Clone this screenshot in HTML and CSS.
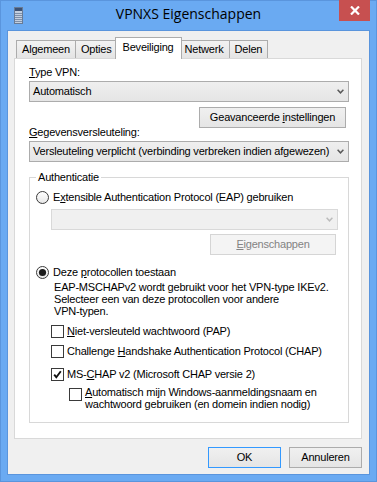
FILE: index.html
```html
<!DOCTYPE html>
<html lang="nl">
<head>
<meta charset="utf-8">
<title>VPNXS Eigenschappen</title>
<link rel="stylesheet" href="styles.css">
</head>
<body>
<div class="window">
  <div class="titlebar">
    <div class="tb-left">
      <svg class="app-icon" width="9" height="17" viewBox="0 0 9 17">
        <rect x="0.5" y="0.5" width="8" height="16" fill="#c3cfdf" stroke="#687b96"/>
        <rect x="1" y="1" width="7" height="3" fill="#3d5274"/>
        <rect x="1" y="6" width="7" height="1" fill="#7d8fa9"/>
        <rect x="1" y="8" width="7" height="1" fill="#7d8fa9"/>
        <rect x="1" y="10" width="7" height="1" fill="#7d8fa9"/>
        <rect x="1" y="12" width="7" height="1" fill="#7d8fa9"/>
        <rect x="1" y="14" width="7" height="1" fill="#7d8fa9"/>
      </svg>
    </div>
    <div class="title">VPNXS Eigenschappen</div>
    <div class="tb-right">
      <div class="close">
        <svg width="10" height="9" viewBox="0 0 10 9"><path d="M1 0.5 L9 8.5 M9 0.5 L1 8.5" stroke="#fff" stroke-width="2.2" fill="none"/></svg>
      </div>
    </div>
  </div>
  <div class="client">
    <div class="tabs">
      <div class="tab">Algemeen</div>
      <div class="tab">Opties</div>
      <div class="tab active">Beveiliging</div>
      <div class="tab">Netwerk</div>
      <div class="tab">Delen</div>
    </div>
    <div class="panel">
      <div class="label"><u>T</u>ype VPN:</div>
      <div class="combo">
        <span class="combo-text">Automatisch</span>
        <span class="combo-arrow"><svg width="7" height="5" viewBox="0 0 7 5"><polyline points="0.6,0.8 3.5,3.8 6.4,0.8" fill="none" stroke="#5a5a5a" stroke-width="1.5"/></svg></span>
      </div>
      <div class="btn btn-adv">Geavanceerde <u>i</u>nstellingen</div>
      <div class="label label-enc"><u>G</u>egevensversleuteling:</div>
      <div class="combo">
        <span class="combo-text">Versleuteling verplicht (verbinding verbreken indien afgewezen)</span>
        <span class="combo-arrow"><svg width="7" height="5" viewBox="0 0 7 5"><polyline points="0.6,0.8 3.5,3.8 6.4,0.8" fill="none" stroke="#5a5a5a" stroke-width="1.5"/></svg></span>
      </div>
      <fieldset class="group">
        <legend>Authenticatie</legend>
        <div class="opt opt-eap">
          <svg class="radio" width="13" height="13" viewBox="0 0 13 13"><defs><linearGradient id="rg1" x1="0" y1="0" x2="0" y2="1"><stop offset="0" stop-color="#fff"/><stop offset="1" stop-color="#e6e6e6"/></linearGradient></defs><circle cx="6.5" cy="6.5" r="6" fill="url(#rg1)" stroke="#3a3a3a"/></svg>
          <span>E<u>x</u>tensible Authentication Protocol (EAP) gebruiken</span>
        </div>
        <div class="combo combo-disabled eap-combo">
          <span class="combo-text"></span>
          <span class="combo-arrow"><svg width="7" height="5" viewBox="0 0 7 5"><polyline points="0.6,0.8 3.5,3.8 6.4,0.8" fill="none" stroke="#bcbcbc" stroke-width="1.5"/></svg></span>
        </div>
        <div class="btn btn-disabled eap-btn"><u>E</u>igenschappen</div>
        <div class="opt opt-allow">
          <svg class="radio" width="13" height="13" viewBox="0 0 13 13"><defs><linearGradient id="rg2" x1="0" y1="0" x2="0" y2="1"><stop offset="0" stop-color="#fff"/><stop offset="1" stop-color="#e6e6e6"/></linearGradient></defs><circle cx="6.5" cy="6.5" r="6" fill="url(#rg2)" stroke="#3a3a3a"/><circle cx="6.5" cy="6.5" r="3.6" fill="#1b1b1b"/></svg>
          <span>Deze <u>p</u>rotocollen toestaan</span>
        </div>
        <div class="desc">
          <span>EAP-MSCHAPv2 wordt gebruikt voor het VPN-type IKEv2.</span>
          <span>Selecteer een van deze protocollen voor andere</span>
          <span>VPN-typen.</span>
        </div>
        <div class="chk-row row-pap">
          <span class="chk"></span>
          <span><u>N</u>iet-versleuteld wachtwoord (PAP)</span>
        </div>
        <div class="chk-row row-chap">
          <span class="chk"></span>
          <span>Challenge <u>H</u>andshake Authentication Protocol (CHAP)</span>
        </div>
        <div class="chk-row row-ms">
          <span class="chk"><svg width="11" height="11" viewBox="0 0 11 11"><path d="M2.2 5.6 L4.3 8.2 L8.8 2.2" fill="none" stroke="#111" stroke-width="1.9"/></svg></span>
          <span>MS-<u>C</u>HAP v2 (Microsoft CHAP versie 2)</span>
        </div>
        <div class="chk-row row-auto">
          <span class="chk"></span>
          <span class="auto-text"><span><u>A</u>utomatisch mijn Windows-aanmeldingsnaam en</span><span>wachtwoord gebruiken (en domein indien nodig)</span></span>
        </div>
      </fieldset>
    </div>
    <div class="footer">
      <div class="btn btn-foot btn-default">OK</div>
      <div class="btn btn-foot">Annuleren</div>
    </div>
  </div>
</div>
</body>
</html>
```

FILE: styles.css
```css
html, body {
  margin: 0;
  padding: 0;
  background: #ffffff;
}

body {
  font-family: "Liberation Sans", Arial, sans-serif;
  font-size: 11px;
  letter-spacing: -0.2px;
  color: #000;
}

.window {
  width: 377px;
  height: 482px;
  box-sizing: border-box;
  border: 1px solid #5a95dd;
  background: #6aaaf2;
  padding: 0 6px 7px;
  display: flex;
  flex-direction: column;
}

.titlebar {
  flex: none;
  height: 29px;
  margin: 0 -6px;
  display: grid;
  grid-template-columns: 1fr auto 1fr;
}

.tb-left {
  padding-left: 13px;
  padding-top: 6px;
}

.app-icon {
  display: block;
}

.title {
  font-family: "Open Sans", "Noto Sans", sans-serif;
  font-size: 14px;
  letter-spacing: 0;
  line-height: 20px;
  margin-top: 3px;
  color: #000;
  white-space: nowrap;
}

.tb-right {
  display: flex;
  justify-content: flex-end;
  align-items: flex-start;
}

.close {
  width: 31px;
  height: 21px;
  margin-top: -1px;
  margin-right: 6px;
  background: #c75050;
  display: flex;
  align-items: center;
  justify-content: center;
}

.close svg {
  display: block;
}

.client {
  flex: 1;
  border: 1px solid #5a95dd;
  background: #f0f0f0;
  padding: 6px 7px 6px 6px;
  display: flex;
  flex-direction: column;
}

/* tabs */
.tabs {
  display: flex;
  align-items: flex-end;
  padding-left: 2px;
}

.tab {
  border: 1px solid #acacac;
  border-bottom: none;
  padding: 2px 5px;
  line-height: 13px;
  background: linear-gradient(#f2f2f2, #e4e4e4);
  margin-left: -1px;
  white-space: nowrap;
}

.tab:first-child {
  margin-left: 0;
}

.tab.active {
  background: #fff;
  padding: 3px 7px 5px;
  margin: 0 -2px -1px -3px;
  position: relative;
  z-index: 1;
}

/* panel */
.panel {
  flex: none;
  border: 1px solid #d9d9d9;
  background: #fff;
  padding: 7px 12px 15px 14px;
  display: flex;
  flex-direction: column;
}

.label {
  line-height: 13px;
}

.label-enc {
  margin-top: -2px;
}

.label + .combo {
  margin-top: 2px;
}

.combo {
  box-sizing: border-box;
  height: 21px;
  border: 1px solid #acacac;
  background: linear-gradient(#efefef, #e5e5e5);
  display: flex;
}

.combo-text {
  flex: 1;
  min-width: 0;
  overflow: hidden;
  white-space: nowrap;
  padding-left: 3px;
  line-height: 19px;
}

.combo-arrow {
  width: 15px;
  flex: none;
  display: flex;
  align-items: center;
  justify-content: center;
}

.combo-arrow svg {
  display: block;
}

.combo-disabled {
  background: #f0f0f0;
  border-color: #d9d9d9;
}

.btn {
  box-sizing: border-box;
  height: 21px;
  border: 1px solid #acacac;
  background: linear-gradient(#f0f0f0, #e5e5e5);
  text-align: center;
  line-height: 19px;
  white-space: nowrap;
}

.btn-adv {
  align-self: flex-end;
  width: 147px;
  margin-top: 5px;
  margin-right: 3px;
}

.btn-disabled {
  background: #f4f4f4;
  border-color: #d5d5d5;
  color: #838383;
}

/* group box */
.group {
  margin: 9px 0 0 0;
  padding: 0 0 12px 6px;
  border: 1px solid #d8d8d8;
  min-inline-size: 0;
}

.group legend {
  padding: 0 2px;
  line-height: 13px;
}

.opt {
  display: flex;
  align-items: center;
  gap: 4px;
  height: 13px;
  line-height: 13px;
  white-space: nowrap;
}

.radio {
  display: block;
  flex: none;
}

.opt-eap {
  margin-top: 7px;
}

.eap-combo {
  margin-top: 5px;
  margin-left: 15px;
  width: 287px;
}

.eap-btn {
  margin-top: 4px;
  margin-left: 174px;
  width: 126px;
}

.opt-allow {
  margin-top: 11px;
}

.desc {
  margin-top: 2px;
  margin-left: 18px;
  line-height: 12px;
  display: flex;
  flex-direction: column;
  white-space: nowrap;
}

.chk-row {
  display: flex;
  align-items: center;
  gap: 3px;
  margin-left: 15px;
  height: 13px;
  line-height: 13px;
  white-space: nowrap;
}

.chk {
  box-sizing: border-box;
  width: 13px;
  height: 13px;
  flex: none;
  border: 1px solid #3a3a3a;
  background: #fff;
}

.chk svg {
  display: block;
}

.row-pap {
  margin-top: 8px;
}

.row-chap {
  margin-top: 7px;
}

.row-ms {
  margin-top: 10px;
}

.row-auto {
  margin-top: 5px;
  margin-left: 33px;
  height: auto;
  align-items: flex-start;
}

.row-auto .chk {
  margin-top: 2px;
}

.auto-text {
  display: flex;
  flex-direction: column;
  line-height: 12px;
}

/* footer */
.footer {
  display: flex;
  justify-content: flex-end;
  gap: 8px;
  margin-top: 8px;
}

.btn-foot {
  width: 73px;
}

.btn-default {
  border-color: #3399ff;
}
```
